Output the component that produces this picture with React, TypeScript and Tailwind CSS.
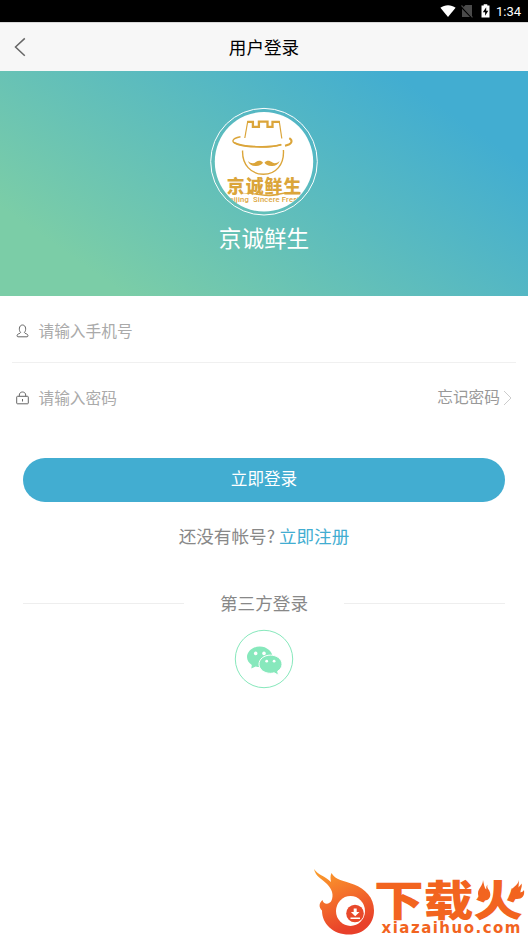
function StatusBar() {
  return (
    <div className="flex h-[22px] items-center justify-end bg-black pr-[7px]">
      <svg width="16" height="12" viewBox="0 0 16 12" className="mr-[5px]" fill="#fff">
        <path d="M8 12 0.4 2.8C2.6 1 5.2 0.2 8 0.2s5.4 0.8 7.6 2.6Z" />
      </svg>
      <svg width="12" height="14" viewBox="0 0 12 14" className="mr-[8px]">
        <path d="M4.5 1H11v12L2 3.5Z M1 4.8 9 13H1Z" fill="#4a4a4a" />
        <path d="M0.5 1.5 11.5 13.3" stroke="#4a4a4a" strokeWidth="1.1" />
      </svg>
      <svg width="9" height="14" viewBox="0 0 9 14" className="mr-[6px]">
        <path d="M2.7 0.3h3.6v1.2H8.5v12H0.5v-12h2.2Z" fill="#fff" />
        <path d="M5.2 3.2 1.8 8.2h2.3v3.6L7.3 6.8H5.2Z" fill="#000" />
      </svg>
      <span className="pt-px font-[Roboto,sans-serif] text-[13px] leading-none text-white">
        1:34
      </span>
    </div>
  )
}

function Logo() {
  return (
    <svg width="108" height="109" viewBox="0 -0.5 108 109">
      <defs>
        <clipPath id="logo-clip">
          <ellipse cx="54" cy="54.3" rx="49.2" ry="49.8" />
        </clipPath>
      </defs>
      <circle cx="54" cy="54.2" r="53.3" fill="none" stroke="#fff" strokeWidth="1" />
      <ellipse cx="54" cy="54.3" rx="49.2" ry="49.8" fill="#fff" />
      <g clipPath="url(#logo-clip)">
        <g fill="none" stroke="#dba53a">
          {/* hat */}
          <path d="M37.8 13.5 34.8 30.5" strokeWidth="1.2" />
          <path d="M69.2 13.5 71.8 31" strokeWidth="1.2" />
          <path d="M37.3 14.4h5.6v5h6v-5.2h8.6v5.2h5v-5h7.2" strokeWidth="2.3" />
          <path d="M30.5 29.3C21 31 20.8 35 28 37C40 40.3 60 40.2 71.3 37.2" strokeWidth="1.4" />
          <path d="M24 34.8C32 39.8 60 40.6 71.3 37" strokeWidth="1.5" />
          <path d="M79.3 30.6c3.8 2.5 3 6-4.3 7.6" strokeWidth="2" />
          {/* face */}
          <path d="M32.6 43C32 57 41 66.8 53.4 66.8S74.4 57 73.4 42.5" strokeWidth="1.4" />
        </g>
        <g fill="#dba53a">
          <path d="M53 55.2c-1.9-2.8-5-2.4-6.8-.9-2.4 2-5.1 2-8.4-.8 1.5 3.8 4.7 5.3 8.4 5 3.1-.2 5.7-1.2 6.8-3.3Z" />
          <path d="M54.5 55.2c1.9-2.8 5-2.4 6.8-.9 2.4 2 5.1 2 8.4-.8-1.5 3.8-4.7 5.3-8.4 5-3.1-.2-5.7-1.2-6.8-3.3Z" />
          <text
            x="16.8"
            y="85.4"
            fontSize="17.8"
            fontWeight="900"
            textLength="74.5"
            className="font-['Noto_Sans_CJK_SC',sans-serif]"
          >
            京诚鲜生
          </text>
          <path d="M31 86.5c12-2.8 18 1 29 .6 8-.2 15-3.6 31-2.6-15 0-22 3.8-31 4.3-10 .4-17-3.8-29-2.3Z" />
          <text
            x="14.5"
            y="94.4"
            fontSize="7.6"
            fontWeight="500"
            textLength="77"
            className="font-[Roboto,sans-serif] whitespace-pre"
          >
            Beijing  Sincere Fresh
          </text>
        </g>
      </g>
    </svg>
  )
}

function WechatButton() {
  return (
    <button className="mt-[14px] flex self-center">
      <svg width="60" height="60" viewBox="0 0 60 60">
        <circle cx="30" cy="30" r="28.7" fill="none" stroke="#87e8bc" strokeWidth="1" />
        <path
          d="M25.8 17.5C18.8 17.500 13 22.200 13 28.100c0 3.300 1.800 6 4.800 7.900L17.300 39.500l4.400-2.100c1.300.4 2.700.6 4.100.6 7 0 12.700-4.300 12.700-9.900S32.800 17.500 25.800 17.500Z"
          fill="#87e8bc"
        />
        <path
          d="M36.400 26.100c-6.300 0-11.400 4-11.400 9.100s5.100 9.100 11.400 9.100c1.300 0 2.600-.2 3.800-.5l4.200 2.400-.7-4.100c2.800-1.700 4.300-4.100 4.300-6.900 0-5.100-5.200-9.100-11.600-9.100Z"
          fill="#87e8bc"
          stroke="#fff"
          strokeWidth="1"
        />
        <g fill="#fff">
          <circle cx="21.700" cy="24.400" r="1.800" />
          <circle cx="30" cy="24.400" r="1.800" />
          <circle cx="32.700" cy="32.200" r="1.400" />
          <circle cx="40.100" cy="32.200" r="1.400" />
        </g>
      </svg>
    </button>
  )
}

function Watermark() {
  return (
    <svg
      width="218"
      height="74"
      viewBox="0 0 218 74"
      className="absolute right-0 bottom-0"
    >
      <defs>
        <linearGradient id="flame" x1="0" y1="0" x2="0.350" y2="1">
          <stop offset="0" stopColor="#fba12c" />
          <stop offset="0.500" stopColor="#f4702b" />
          <stop offset="1" stopColor="#e8402a" />
        </linearGradient>
      </defs>
      <path
        d="M4 5C6 13 11 14 17 20C22 25 24 31 21.500 36.500C19.500 41 13 40.500 12.500 36C9 39 8.500 43 12 46.500C12 60 23 70.500 39 70.500C54 70.500 64 60 64 46.500C64 33 55 25 44 20.500C34 16.500 25 16 21.500 9C20 12 20.500 15 21 18C15 12 8 11 4 5Z"
        fill="url(#flame)"
      />
      <ellipse cx="40.500" cy="47" rx="14.500" ry="15" fill="#fff" />
      <circle cx="45" cy="49.500" r="8.800" fill="#e8492b" />
      <path d="M43.700 44.500h3v3.500h2.800L45.200 52.200 40.900 48h2.800ZM40.500 53.500h9.500v1.500H40.500Z" fill="#fff" />
      <g fill="#f2641f">
        <text
          x="64"
          y="52.300"
          fontSize="42.500"
          fontWeight="900"
          textLength="149"
          lengthAdjust="spacingAndGlyphs"
          className="font-['Noto_Sans_CJK_SC',sans-serif]"
        >
          下载火
        </text>
        {/* small flames either side of the last character */}
        <path d="M173 16c0 6-5 8-5 13.500 0 4 3 7 6.500 7 4 0 6.800-3.500 5.500-8-1-3.500-3.500-4-2.500-8-1.500 2-1.500 3.500-1 5.500-2.500-2.500-2.500-6-3.500-10Z" />
        <path d="M209 16c-1 6-8 7-8 13 0 4 3 6 6 6 5 0 8-3 7-9-1 1.500-2 2-3.500 2.500 0-4 2-5 1-9-1 2-2 2.500-3 4Z" />
        <text
          x="71.500"
          y="69"
          fontSize="15"
          fontWeight="700"
          textLength="139"
          className="font-['DejaVu_Sans',sans-serif]"
        >
          xiazaihuo.com
        </text>
      </g>
    </svg>
  )
}

export default function App() {
  return (
    <div className="relative flex h-[938px] w-[528px] flex-col overflow-hidden bg-white font-['Noto_Sans_CJK_SC',sans-serif]">
      <StatusBar />

      {/* Title bar */}
      <header className="grid h-[49px] grid-cols-3 items-center border-t border-[#d8d8d8] bg-[#f7f7f7]">
        <svg width="14" height="20" viewBox="0 0 14 20" className="ml-[13px]">
          <path d="M11.800 1.400 2.500 10l9.300 8.700" fill="none" stroke="#666" strokeWidth="1.500" />
        </svg>
        <h1 className="text-center text-[17.600px] leading-none text-black">用户登录</h1>
      </header>

      {/* Brand banner */}
      <section className="flex h-[225px] flex-col items-center bg-[linear-gradient(35deg,#7bcda7_15%,#42add1_84%)] pt-9">
        <Logo />
        <p className="mt-[10px] text-[22.600px] leading-6 text-white">京诚鲜生</p>
      </section>

      {/* Login form */}
      <form className="flex flex-col">
        <label className="mx-3 flex h-[67px] items-center border-b border-[#f0f0f0] pt-1 pl-1">
          <svg width="13" height="14" viewBox="0 0 13 14" fill="none" stroke="#666">
            <path d="M4.600 8.400C2.700 6.800 2.700 1 6.500 1s3.800 5.800 1.900 7.400c.3 1.600 3.600 1 3.600 3.400 0 .6-.5 1-1 1H2c-.5 0-1-.4-1-1 0-2.400 3.300-1.800 3.600-3.400Z" />
          </svg>
          <span className="ml-[9.500px] text-[15.700px] leading-6 text-[#aaa]">请输入手机号</span>
        </label>
        <div className="mx-3 flex h-[68px] items-center pt-px pl-1">
          <svg width="13" height="14" viewBox="0 0 13 14" fill="none" stroke="#666">
            <rect x="0.700" y="5.300" width="11.600" height="7.500" rx="0.800" />
            <path d="M3.300 5.300V4c0-4 6.400-4 6.400 0v1.300M6.500 8v2.500" />
          </svg>
          <span className="ml-[9.500px] text-[15.700px] leading-6 text-[#aaa]">请输入密码</span>
          <a className="ml-auto flex items-center text-[15.700px] leading-6 text-[#999]">
            <span className="pb-0.5">忘记密码</span>
            <svg width="10" height="16" viewBox="0 0 10 16" className="mr-[3px] ml-[3px]">
              <path d="m1 1 7 7-7 7" fill="none" stroke="#ccc" />
            </svg>
          </a>
        </div>
        <button
          type="button"
          className="mx-[23px] mt-[27px] flex h-[44px] items-center justify-center rounded-[22px] bg-[#42add1] pb-[3px] text-[16.600px] leading-none text-white"
        >
          立即登录
        </button>
      </form>

      <p className="mt-[22px] text-center text-[17.600px] leading-6 text-[#888]">
        还没有帐号? <a className="text-[#42add1]">立即注册</a>
      </p>

      {/* Third-party login */}
      <div className="mx-[23px] mt-[43px] flex items-center justify-between text-[17.600px] leading-6 text-[#888]">
        <div className="h-px w-[161px] bg-[#eee]" />
        第三方登录
        <div className="h-px w-[161px] bg-[#eee]" />
      </div>
      <WechatButton />

      <Watermark />
    </div>
  )
}
